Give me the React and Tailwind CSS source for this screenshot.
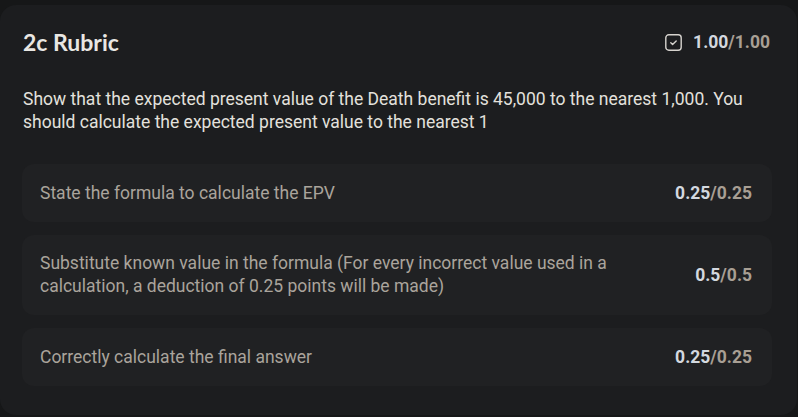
import React from "react";

function SquareCheck() {
  return (
    <svg width="17" height="17" viewBox="0 0 17 17" fill="none" stroke="#d6d3ce" strokeWidth="1.4" strokeLinecap="round" strokeLinejoin="round">
      <rect x="0.8" y="0.8" width="15.4" height="15.4" rx="3" />
      <path d="M5.8 8.7l1.8 1.7 3.6-3.5" />
    </svg>
  );
}

function Row({ text, got, total, tall }) {
  return (
    <div className={`flex items-center justify-between rounded-xl bg-[#202123] pl-[18px] pr-[20px] ${tall ? "h-[80px]" : "h-[58px]"}`}>
      <div className="text-[17.5px] leading-[23px] text-[#aaa49c] max-w-[610px]">{text}</div>
      <div className="text-[17.5px] font-bold leading-[23px] whitespace-nowrap">
        <span className="text-[#d3d8df]">{got}</span>
        <span className="text-[#a89f94]">/{total}</span>
      </div>
    </div>
  );
}

export default function App() {
  return (
    <div className="h-[417px] w-[798px] bg-[#161718] pt-[5px]" style={{ fontFamily: "Roboto, 'Liberation Sans', sans-serif" }}>
      <div className="h-[410px] w-[797px] rounded-2xl bg-[#1c1d1f] pl-[22px] pr-[25px] pt-[23px]">
        <div className="flex items-center justify-between h-[28px]">
          <div className="pl-[1px] text-[23px] font-bold text-[#e9e7e3]" style={{ fontFamily: "Lato, 'Open Sans', sans-serif" }}>2c Rubric</div>
          <div className="flex items-center gap-[11px] pr-[2px]">
            <SquareCheck />
            <div className="text-[17.5px] font-bold">
              <span className="text-[#d3d8df]">1.00</span>
              <span className="text-[#a89f94]">/1.00</span>
            </div>
          </div>
        </div>
        <p className="mt-[32px] pl-[1px] text-[17.5px] leading-[23px] text-[#e3e1dd]">
          Show that the expected present value of the Death benefit is 45,000 to the nearest 1,000. You should calculate the expected present value to the nearest 1
        </p>
        <div className="mt-[30px] flex flex-col gap-[13px]">
          <Row text="State the formula to calculate the EPV" got="0.25" total="0.25" />
          <Row text="Substitute known value in the formula (For every incorrect value used in a calculation, a deduction of 0.25 points will be made)" got="0.5" total="0.5" tall />
          <Row text="Correctly calculate the final answer" got="0.25" total="0.25" />
        </div>
      </div>
    </div>
  );
}
